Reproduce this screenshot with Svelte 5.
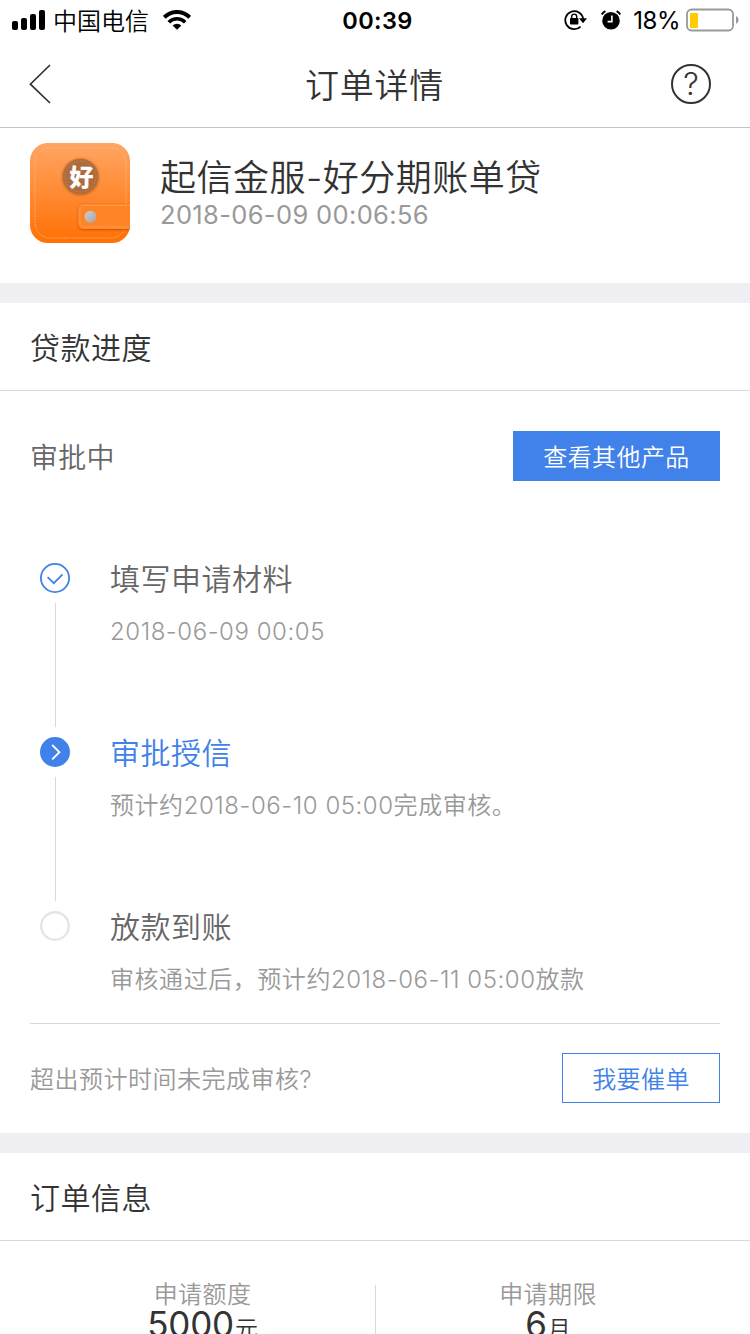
<script lang="ts">
    type Step = { state: 'done' | 'active' | 'pending'; title: string; note: string };

    const steps: Step[] = [
        { state: 'done', title: '填写申请材料', note: '2018-06-09 00:05' },
        { state: 'active', title: '审批授信', note: '预计约2018-06-10 05:00完成审核。' },
        { state: 'pending', title: '放款到账', note: '审核通过后，预计约2018-06-11 05:00放款' }
    ];

    const facts = [
        { label: '申请额度', value: '5000', unit: '元' },
        { label: '申请期限', value: '6', unit: '月' }
    ];
</script>

<div class="screen">
    <div class="status-bar">
        <div class="status-left">
            <svg width="34" height="20" viewBox="0 0 34 20">
                <rect x="0" y="11" width="6" height="9" rx="2" />
                <rect x="9" y="8" width="6" height="12" rx="2" />
                <rect x="18" y="4" width="6" height="16" rx="2" />
                <rect x="27" y="0" width="6" height="20" rx="2" />
            </svg>
            <span class="carrier">中国电信</span>
            <svg class="wifi" width="28" height="20" viewBox="0 0 28 20">
                <path d="M1.3 7.3a17.8 17.8 0 0 1 25.4 0" fill="none" stroke="#000" stroke-width="4" />
                <path d="M5.8 12.2a11.5 11.5 0 0 1 16.4 0" fill="none" stroke="#000" stroke-width="3.6" />
                <path d="M14 19.8l-4.4-4.2a6.2 6.2 0 0 1 8.8 0z" />
            </svg>
        </div>
        <span class="clock">00:39</span>
        <div class="status-right">
            <svg width="24" height="22" viewBox="0 0 24 22">
                <path d="M16.6 17.6A9 9 0 1 1 19.2 10" fill="none" stroke="#000" stroke-width="1.8" />
                <path d="M15 9.3h8l-4 5z" />
                <rect x="6" y="9" width="8.4" height="6.6" rx="0.8" />
                <path d="M7.7 9.5V7.6a2.5 2.5 0 0 1 5 0v1.9" fill="none" stroke="#000" stroke-width="1.4" />
            </svg>
            <svg class="alarm" width="20" height="20" viewBox="0 0 20 20">
                <circle cx="10" cy="10.8" r="8.8" />
                <path d="M.8 4.4A9 9 0 0 1 4.4 1.2M19.2 4.4A9 9 0 0 0 15.6 1.2" fill="none" stroke="#000" stroke-width="2" />
                <path d="M10.9 5.4v6.2H6.6" fill="none" stroke="#fff" stroke-width="1.6" />
            </svg>
            <span class="percent">18%</span>
            <svg width="54" height="24" viewBox="0 0 54 24">
                <rect x="1" y="1.5" width="46" height="21" rx="4.5" fill="none" stroke="#999" stroke-width="1.8" />
                <rect x="4" y="5" width="8" height="15" rx="1" fill="#fc0" />
                <path d="M50 8.1a4.4 4.4 0 0 1 0 8z" fill="#999" />
            </svg>
        </div>
    </div>

    <header class="nav">
        <svg width="24" height="40" viewBox="0 0 24 40">
            <path d="M21 1L1.4 20.2 21 39" fill="none" stroke="#333" stroke-width="1.7" />
        </svg>
        <h1>订单详情</h1>
        <div class="help">?</div>
    </header>

    <section class="product">
        <svg width="100" height="100" viewBox="0 0 100 100">
            <defs>
                <linearGradient id="wallet" x1="0" y1="0" x2="0" y2="1">
                    <stop offset="0" stop-color="#ffa563" />
                    <stop offset="1" stop-color="#ff7004" />
                </linearGradient>
                <linearGradient id="snap" x1="0" y1="0" x2="1" y2="1">
                    <stop offset="0" stop-color="#d2cccb" />
                    <stop offset="1" stop-color="#a9a2a4" />
                </linearGradient>
                <filter id="soft" x="-20%" y="-20%" width="140%" height="140%">
                    <feGaussianBlur stdDeviation="1" />
                </filter>
                <clipPath id="edge"><rect width="100" height="100" rx="18" /></clipPath>
            </defs>
            <g clip-path="url(#edge)">
                <rect width="100" height="100" fill="url(#wallet)" />
                <rect x="5" y="5" width="91" height="90" rx="15" fill="none" stroke="#ffbd88" stroke-dasharray="1.6 1" opacity=".75" />
                <path d="M102 61.5H53a5 5 0 0 0-5 5V82a5 5 0 0 0 5 5h49z" fill="#b64b00" opacity=".75" filter="url(#soft)" />
                <path d="M102 60.5H53a5 5 0 0 0-5 5V81a5 5 0 0 0 5 5h49z" fill="#ff8426" />
                <path d="M102 62.5H53a3 3 0 0 0-3 3V81a3 3 0 0 0 3 3h49" fill="none" stroke="#ffb273" stroke-dasharray="1.6 1" opacity=".8" />
                <circle cx="50.5" cy="34" r="18.5" fill="#a55a24" opacity=".7" filter="url(#soft)" />
                <circle cx="50.5" cy="33.5" r="17.5" fill="#ae6c3c" />
                <circle cx="50.5" cy="33.5" r="15.5" fill="none" stroke="#c18a61" stroke-width=".8" stroke-dasharray="1.6 1.4" />
                <circle cx="60.5" cy="73.7" r="6" fill="url(#snap)" />
                <text class="badge" x="51.5" y="42.5" text-anchor="middle">好</text>
            </g>
        </svg>
        <div class="product-text">
            <h2>起信金服-好分期账单贷</h2>
            <p>2018-06-09 00:06:56</p>
        </div>
    </section>

    <section class="card">
        <h3>贷款进度</h3>
        <div class="state-row">
            <span>审批中</span>
            <button class="primary">查看其他产品</button>
        </div>
        <ol class="steps">
            {#each steps as step}
                <li class={step.state}>
                    <div class="rail">
                        <svg width="30" height="30" viewBox="0 0 30 30" fill="none">
                            {#if step.state === 'done'}
                                <circle cx="15" cy="15" r="14.1" stroke="#4181ea" stroke-width="1.8" />
                                <path d="M7.6 14.2l6.2 6 8.8-8.8" stroke="#4181ea" stroke-width="1.8" />
                            {:else if step.state === 'active'}
                                <circle cx="15" cy="15" r="15" fill="#4181ea" />
                                <path d="M12.2 8l7.2 7.2-7.2 7.2" stroke="#fff" stroke-width="1.9" />
                            {:else}
                                <circle cx="15" cy="15" r="13.8" stroke="#e5e5e5" stroke-width="2.4" />
                            {/if}
                        </svg>
                    </div>
                    <div class="step-text">
                        <h4>{step.title}</h4>
                        <p>{step.note}</p>
                    </div>
                </li>
            {/each}
        </ol>
        <div class="urge-row">
            <span>超出预计时间未完成审核?</span>
            <button class="outline">我要催单</button>
        </div>
    </section>

    <section class="card">
        <h3>订单信息</h3>
        <div class="facts">
            {#each facts as fact}
                <div class="fact">
                    <span class="label">{fact.label}</span>
                    <span class="value">{fact.value}<small>{fact.unit}</small></span>
                </div>
            {/each}
        </div>
    </section>
</div>

<style>
    :global(body) { background: #fff; }
    .screen {
        width: 750px;
        height: 1334px;
        overflow: hidden;
        background: #fff;
        color: #333;
        font-family: Inter, "Noto Sans CJK SC", sans-serif;
        font-weight: 350;
    }
    h1, h2, h3, h4, p, ol { margin: 0; padding: 0; font-weight: inherit; }
    svg { display: block; flex: none; }
    button { font: inherit; border-radius: 0; box-sizing: border-box; padding: 0; }

    .status-bar {
        display: grid;
        grid-template-columns: 1fr auto 1fr;
        align-items: center;
        height: 40px;
        padding: 0 10px 0 12px;
        color: #000;
        font-weight: 400;
    }
    .status-left { display: flex; align-items: center; }
    .carrier { margin-left: 7px; padding-top: 3px; font-size: 24px; line-height: 37px; font-weight: 350; }
    .wifi { margin-left: 14px; }
    .clock { padding-left: 3px; font-size: 23.5px; font-weight: 600; letter-spacing: 0.4px; }
    .status-right { display: flex; align-items: center; justify-content: flex-end; }
    .alarm { margin-left: 13px; }
    .percent { margin: 1px 6px 0 12px; font-size: 24px; letter-spacing: -0.5px; }

    .nav {
        display: grid;
        grid-template-columns: 1fr auto 1fr;
        align-items: center;
        height: 87px;
        padding: 0 39px 0 29px;
        border-bottom: 1px solid #c4c4c4;
    }
    .nav h1 { padding: 4px 0 0 9px; font-size: 34px; line-height: 44px; letter-spacing: 0.7px; }
    .help {
        justify-self: end;
        width: 40px;
        height: 40px;
        box-sizing: border-box;
        border: 2px solid #333;
        border-radius: 50%;
        font-size: 31px;
        line-height: 36px;
        font-weight: 300;
        text-align: center;
    }

    .product {
        display: flex;
        gap: 30px;
        height: 140px;
        padding: 15px 30px 0;
    }
    .badge { font-size: 24px; font-weight: 900; fill: #fff; }
    .product-text { padding-top: 10px; }
    .product h2 { font-size: 36px; line-height: 50px; letter-spacing: 0.5px; }
    .product p {
        margin-top: -2px;
        color: #999;
        font-size: 25.5px;
        line-height: 28px;
        letter-spacing: 0.35px;
        font-weight: 400;
    }

    .card { border-top: 20px solid #efeff4; }
    .card h3 {
        height: 87px;
        padding-left: 30px;
        border-bottom: 1px solid #d9d9d9;
        font-size: 30px;
        line-height: 91px;
        letter-spacing: 0.5px;
    }
    .state-row {
        display: flex;
        align-items: center;
        justify-content: space-between;
        padding: 40px 30px 0;
        color: #666;
        font-size: 28px;
        letter-spacing: 0.2px;
    }
    .primary {
        width: 207px;
        height: 50px;
        padding-bottom: 2px;
        border: none;
        background: #4181ea;
        color: #fff;
        font-size: 24px;
        letter-spacing: 0.4px;
    }

    .steps { list-style: none; padding: 82px 0 0 40px; }
    .steps li { display: flex; height: 174px; }
    .steps li:last-child { height: 112px; }
    .rail { display: flex; flex-direction: column; width: 31px; margin-right: 39px; }
    .steps li:not(:last-child) .rail::after {
        content: '';
        width: 1px;
        height: 124px;
        margin: 10px 0 0 15px;
        background: #d9d9d9;
    }
    .step-text { padding-top: 1px; }
    .step-text h4 { color: #666; font-size: 30px; line-height: 30px; letter-spacing: 0.5px; }
    .step-text p {
        margin-top: 22px;
        color: #999;
        font-size: 24px;
        line-height: 32px;
        letter-spacing: 0.55px;
    }
    .steps .active h4 { color: #4181ea; }

    .urge-row {
        display: flex;
        align-items: center;
        justify-content: space-between;
        height: 107px;
        margin: 0 30px;
        padding-bottom: 2px;
        border-top: 1px solid #d9d9d9;
        color: #999;
        font-size: 24px;
        letter-spacing: 0.5px;
    }
    .outline {
        width: 158px;
        height: 50px;
        border: 1px solid #4181ea;
        background: #fff;
        color: #4181ea;
        letter-spacing: 0.4px;
    }

    .facts { display: grid; grid-template-columns: 375px 375px; padding-top: 44px; }
    .fact {
        display: flex;
        flex-direction: column;
        align-items: center;
        height: 80px;
        box-sizing: border-box;
        padding-left: 30px;
    }
    .fact + .fact { padding: 0 30px 0 0; border-left: 1px solid #d9d9d9; }
    .label { margin-top: -5px; color: #999; font-size: 24px; line-height: 29px; letter-spacing: 0.4px; }
    .value { font-size: 35px; line-height: 30px; font-weight: 400; letter-spacing: -0.2px; }
    .value small { margin-left: 1px; font-size: 23px; font-weight: 350; }
</style>
